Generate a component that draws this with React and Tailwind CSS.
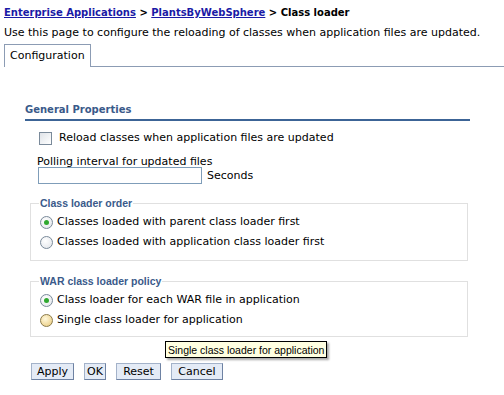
import React from 'react';

function Radio({ checked, hover }) {
  return (
    <span
      className={
        'inline-flex items-center justify-center w-[13px] h-[13px] rounded-full border shrink-0 ' +
        (hover
          ? 'border-[#8a7a4a] bg-[radial-gradient(circle_at_40%_35%,#fff8dc,#e8c878)]'
          : 'border-[#7a8a9a] bg-[radial-gradient(circle_at_40%_35%,#ffffff,#dfe3e8)]')
      }
    >
      {checked && <span className="w-[5px] h-[5px] rounded-full bg-[#2fa82f]" />}
    </span>
  );
}

function Btn({ children, className }) {
  return (
    <button
      className={
        'h-[17px] border border-[#a3b2c9] border-r-[#6e82a3] border-b-[#6e82a3] bg-[#e4ebf6] text-[11px] leading-[14px] text-black ' +
        className
      }
    >
      {children}
    </button>
  );
}

export default function App() {
  return (
    <div className="relative w-[504px] h-[395px] overflow-hidden bg-white font-['DejaVu_Sans',sans-serif] text-[11px] leading-[14px] text-black">
      {/* breadcrumb */}
      <div className="pl-[4px] pt-[6px] font-bold text-[10px]">
        <a className="text-[#1a1aa6] underline">Enterprise Applications</a>
        <span> &gt; </span>
        <a className="text-[#1a1aa6] underline">PlantsByWebSphere</a>
        <span> &gt; Class loader</span>
      </div>
      <div className="pl-[4px] mt-[6px]">
        Use this page to configure the reloading of classes when application files are updated.
      </div>

      {/* tabs */}
      <div className="flex mt-[4px] pl-[4px]">
        <div className="h-[23px] px-[5px] border border-b-0 border-[#8c9cb4] flex items-center">Configuration</div>
        <div className="flex-1 border-b border-[#8c9cb4]" />
      </div>

      <div className="pl-[25px] pr-[34px] pt-[36px]">
        <div className="font-bold text-[10px] text-[#3a5a8a] pb-[2px] border-b-2 border-[#3c6496]">General Properties</div>

        <div className="flex items-center gap-[7px] mt-[10px] ml-[14px]">
          <span className="w-[13px] h-[13px] border border-[#7a8a9a] bg-[linear-gradient(135deg,#dfe3e8,#ffffff)]" />
          <span>Reload classes when application files are updated</span>
        </div>

        <div className="mt-[10px] ml-[12px]">Polling interval for updated files</div>
        <div className="flex items-center ml-[13px] mt-[-2px]">
          <div className="w-[164px] h-[17px] border border-[#7f9db9] bg-white" />
          <span className="ml-[5px]">Seconds</span>
        </div>

        <fieldset className="mt-[12px] ml-[5px] mr-[2px] border border-[#e0e0e0] pl-[9px] pb-[11px] pt-0">
          <legend className="font-bold font-['Liberation_Sans',sans-serif] text-[10.5px] text-[#3a5a8a] px-[1px] -ml-[1px]">Class loader order</legend>
          <div className="flex items-center gap-[4px] mt-[5px]">
            <Radio checked />
            <span>Classes loaded with parent class loader first</span>
          </div>
          <div className="flex items-center gap-[4px] mt-[6px]">
            <Radio />
            <span>Classes loaded with application class loader first</span>
          </div>
        </fieldset>

        <fieldset className="mt-[13px] ml-[5px] mr-[2px] border border-[#e0e0e0] pl-[9px] pb-[9px] pt-0">
          <legend className="font-bold font-['Liberation_Sans',sans-serif] text-[10.5px] text-[#3a5a8a] px-[1px] -ml-[1px]">WAR class loader policy</legend>
          <div className="flex items-center gap-[4px] mt-[5px]">
            <Radio checked />
            <span>Class loader for each WAR file in application</span>
          </div>
          <div className="flex items-center gap-[4px] mt-[6px]">
            <Radio hover />
            <span>Single class loader for application</span>
          </div>
        </fieldset>

        <div className="relative flex gap-[10px] mt-[26px] ml-[6px]">
          <Btn className="w-[43px]">Apply</Btn>
          <Btn className="w-[22px]">OK</Btn>
          <Btn className="w-[45px]">Reset</Btn>
          <Btn className="w-[52px]">Cancel</Btn>
          <div className="absolute left-[134px] top-[-22px] h-[17px] px-[2px] flex items-center border border-black bg-[#ffffe1] shadow-[2px_2px_2px_rgba(0,0,0,0.35)] font-['Liberation_Sans',sans-serif] text-[10.5px] whitespace-nowrap">
            Single class loader for application
          </div>
        </div>
      </div>
    </div>
  );
}
